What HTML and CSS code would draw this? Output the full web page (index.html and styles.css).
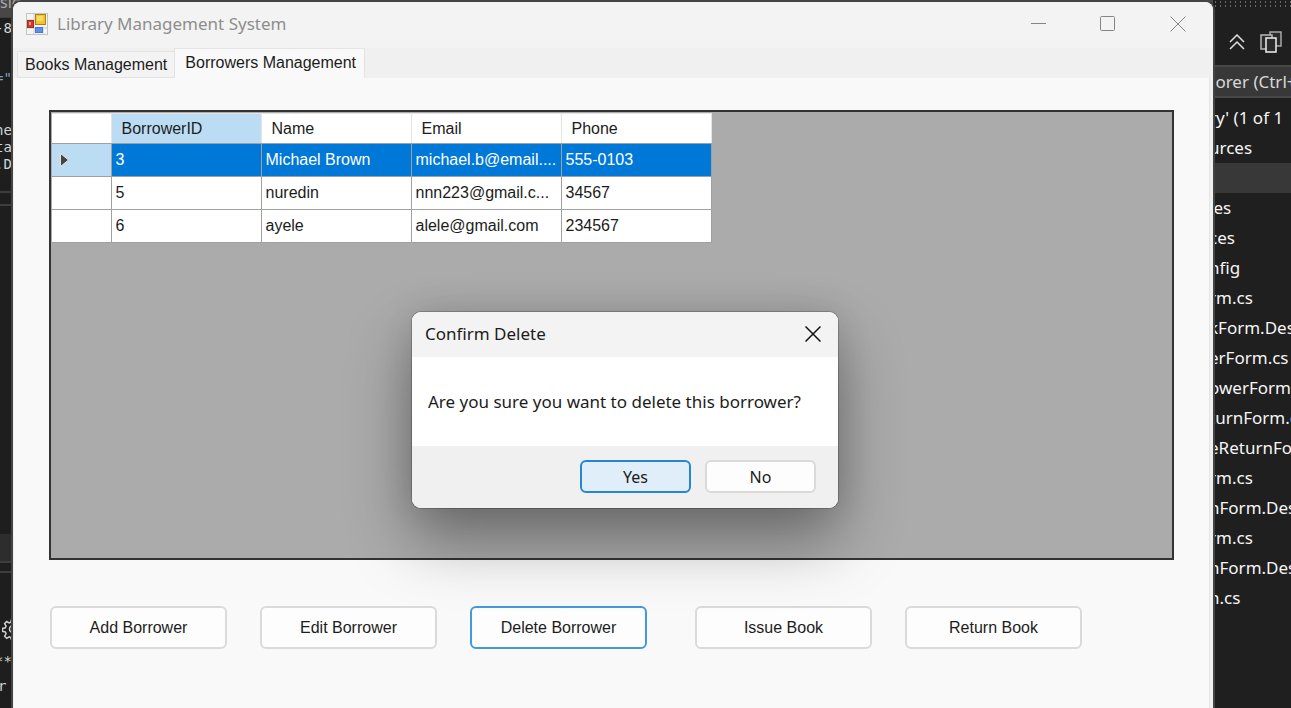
FILE: index.html
```html
<!DOCTYPE html>
<html lang="en">
<head>
<meta charset="utf-8">
<title>Library Management System</title>
<link rel="stylesheet" href="styles.css">
</head>
<body>
<div class="desktop">
  <div class="ide-tabs">
    <span class="ide-tab ide-tab-first">signer.cs</span>
    <span class="ide-tab ide-tab-wide">EditBookForm.cs [Design]</span>
    <span class="ide-tab ide-tab-narrow">EditBookForm.cs</span>
    <span class="ide-tab ide-tab-fill">AddBorrowerForm.cs [Design]</span>
    <span class="ide-tab ide-tab-panel">Solution Explorer</span>
  </div>

  <div class="editor">
    <div class="code code-head">-8</div>
    <div class="code code-attr">="</div>
    <div class="code-group">
      <div class="code">ne</div>
      <div class="code">ta</div>
      <div class="code">.D</div>
    </div>
    <div class="splitter"></div>
    <div class="editor-status"></div>
    <div class="splitter splitter-small"></div>
    <svg class="gear" width="22" height="22" viewBox="0 0 22 22" fill="none" stroke="#d0d0d0" stroke-width="1.5">
      <circle cx="11" cy="11" r="3.5"/>
      <path d="M9.5 1.5h3l.6 2.7 1.8.8 2.4-1.5 2.1 2.1-1.5 2.4.8 1.8 2.7.6v3l-2.7.6-.8 1.8 1.5 2.4-2.1 2.1-2.4-1.5-1.8.8-.6 2.7h-3l-.6-2.7-1.8-.8-2.4 1.5-2.1-2.1 1.5-2.4-.8-1.8-2.7-.6v-3l2.7-.6.8-1.8-1.5-2.4 2.1-2.1 2.4 1.5 1.8-.8z"/>
    </svg>
    <div class="code code-stars">**</div>
    <div class="code code-tail">r</div>
  </div>

  <main class="window">
    <header class="titlebar">
      <svg class="app-icon" width="22" height="22" viewBox="0 0 22 22">
        <rect x=".5" y=".5" width="21" height="21" fill="#f4f4f4" stroke="#c3c3c6"/>
        <path d="M1 7h8M8 1v20M1 15h20M17 14v7" stroke="#cfcfd3" fill="none"/>
        <rect x="9.5" y="1.500" width="10" height="10" fill="#f3c32c" stroke="#a98418"/>
        <rect x="11" y="3" width="6" height="5" fill="#fbdc69"/>
        <rect x="1.500" y="7.500" width="6" height="7" fill="#cf3a2b" stroke="#a12d22"/>
        <rect x="3" y="9" width="2" height="3" fill="#f29a86"/>
        <rect x="9.500" y="14.500" width="7" height="5" fill="#5e90e8" stroke="#4c78cc"/>
      </svg>
      <h1 class="window-title">Library Management System</h1>
      <div class="caption-buttons">
        <button class="caption-button" aria-label="Minimize"><svg width="16" height="16" viewBox="0 0 16 16"><path d="M1 7.500h15"/></svg></button>
        <button class="caption-button" aria-label="Maximize"><svg width="16" height="16" viewBox="0 0 16 16"><rect x=".5" y=".5" width="14" height="14" rx="1"/></svg></button>
        <button class="caption-button" aria-label="Close"><svg width="16" height="16" viewBox="0 0 16 16"><path d="M.5.5l15 15M15.500.5l-15 15"/></svg></button>
      </div>
    </header>

    <nav class="tabs" role="tablist">
      <button class="tab" role="tab" aria-selected="false">Books Management</button>
      <button class="tab tab-active" role="tab" aria-selected="true">Borrowers Management</button>
    </nav>

    <section class="page">
      <div class="grid-view">
        <table class="grid">
          <colgroup><col class="col-marker"><col class="col-data"><col class="col-data"><col class="col-data"><col class="col-data"></colgroup>
          <thead>
            <tr><td class="marker"></td><th class="sorted">BorrowerID</th><th>Name</th><th>Email</th><th>Phone</th></tr>
          </thead>
          <tbody>
            <tr class="selected"><td class="marker"><svg width="9" height="14" viewBox="0 0 9 14"><path d="M.5.5v13L8.500 7z" fill="#444" stroke="#e8e2dc"/></svg></td><td>3</td><td>Michael Brown</td><td>michael.b@email....</td><td>555-0103</td></tr>
            <tr><td class="marker"></td><td>5</td><td>nuredin</td><td>nnn223@gmail.c...</td><td>34567</td></tr>
            <tr><td class="marker"></td><td>6</td><td>ayele</td><td>alele@gmail.com</td><td>234567</td></tr>
          </tbody>
        </table>
      </div>
      <div class="actions">
        <div class="action-group">
          <button class="button">Add Borrower</button>
          <button class="button">Edit Borrower</button>
          <button class="button button-focus">Delete Borrower</button>
        </div>
        <div class="action-group">
          <button class="button">Issue Book</button>
          <button class="button">Return Book</button>
        </div>
      </div>
    </section>

    <div class="dialog" role="dialog" aria-labelledby="dialog-title">
      <header class="dialog-head">
        <h2 class="dialog-title" id="dialog-title">Confirm Delete</h2>
        <button class="dialog-close" aria-label="Close"><svg width="16" height="16" viewBox="0 0 16 16"><path d="M.5.5l15 15M15.500.5l-15 15"/></svg></button>
      </header>
      <p class="dialog-text">Are you sure you want to delete this borrower?</p>
      <footer class="dialog-foot">
        <button class="dialog-button dialog-button-default">Yes</button>
        <button class="dialog-button">No</button>
      </footer>
    </div>
  </main>

  <aside class="explorer">
    <div class="explorer-grip"></div>
    <div class="explorer-tools">
      <svg width="16" height="16" viewBox="0 0 16 16" fill="none" stroke="#e0e0e0" stroke-width="1.500"><path d="M1 8l7-7 7 7M1 15l7-7 7 7"/></svg>
      <svg width="22" height="22" viewBox="0 0 22 22" fill="#2b2b2b" stroke-width="1.500"><path d="M10 1h11v14h-11z" stroke="#a8a8a8"/><path d="M1 4h11v14H1z" stroke="#b8b8b8"/><path d="M6 7h10v14H6z" stroke="#f0f0f0"/></svg>
    </div>
    <div class="explorer-search">lorer (Ctrl+</div>
    <ul class="tree">
      <li>ry' (1 of 1</li>
      <li>urces</li>
      <li class="tree-selected"></li>
      <li>ies</li>
      <li>ces</li>
      <li>nfig</li>
      <li>rm.cs</li>
      <li>kForm.Des</li>
      <li>erForm.cs</li>
      <li>owerForm</li>
      <li>turnForm.c</li>
      <li>eReturnFor</li>
      <li>rm.cs</li>
      <li>nForm.Des</li>
      <li>rm.cs</li>
      <li>nForm.Des</li>
      <li>n.cs</li>
    </ul>
  </aside>
</div>
</body>
</html>
```

FILE: styles.css
```css
* {
  box-sizing: border-box;
}

body {
  margin: 0;
  background: #1f1f1f;
  font-family: "Liberation Sans", Arial, sans-serif;
  font-size: 16px;
  line-height: 20px;
  color: #1c1c1c;
}

button {
  margin: 0;
  padding: 0;
  border: 0;
  background: none;
  font: inherit;
  color: inherit;
}

.desktop {
  position: relative;
  display: grid;
  grid-template-columns: 13px minmax(0, 1fr) 78px;
  height: 100vh;
  overflow: hidden;
}

/* IDE behind the window */
.ide-tabs {
  position: absolute;
  top: 0;
  left: 0;
  right: 78px;
  height: 17px;
  display: flex;
  align-items: flex-end;
  background: #484646;
  font-family: "Noto Sans", sans-serif;
  color: #a8a8a8;
  line-height: 24px;
  white-space: nowrap;
  padding-bottom: 3px;
}

.ide-tab-first { width: 148px; }
.ide-tab-wide { width: 254px; }
.ide-tab-narrow { width: 186px; }
.ide-tab-fill { flex: 1; }
.ide-tab-panel { width: 163px; color: #dcdcdc; }

.editor {
  margin-top: 17px;
  border-top: 1px solid #3d3d3d;
  overflow: hidden;
  background: #1e1e1e;
}

.code {
  height: 17px;
  font-family: "DejaVu Sans Mono", monospace;
  font-size: 14px;
  line-height: 17px;
  text-indent: -5px;
  color: #d4d4d4;
  white-space: pre;
}

.code-head { margin-top: 2px; }
.code-attr { margin-top: 33px; color: #7da3c4; }
.code-group { margin-top: 35px; }

.splitter {
  height: 15px;
  margin-top: 18px;
  border: solid #3d3d3d;
  border-width: 2px 0;
}

.editor-status {
  height: 27px;
  margin-top: 328px;
  background: #2d2d2d;
}

.splitter-small {
  height: 12px;
  margin-top: 0;
}

.gear {
  display: block;
  margin: 45px 0 0 2px;
}

.code-stars { margin-top: 13px; }
.code-tail { margin-top: 8px; text-indent: -2px; }

.explorer {
  background: #1f1f1f;
  color: #f5f5f5;
  font-family: "Noto Sans", sans-serif;
  font-size: 17px;
  line-height: 30px;
  white-space: nowrap;
  overflow: hidden;
}

.explorer-grip {
  height: 8px;
  background: radial-gradient(circle, #686868 1px, transparent 1px) 0 0 / 5px 4px;
}

.explorer-tools {
  display: flex;
  align-items: center;
  gap: 15px;
  height: 57px;
  padding: 10px 0 0 16px;
}

.explorer-search {
  height: 33px;
  border: solid #484848;
  border-width: 2px 0;
  background: #383838;
  color: #d8d8d8;
  text-indent: -2px;
}

.tree {
  margin: 5px 0 0;
  padding: 0;
  list-style: none;
  text-indent: -4px;
}

.tree li {
  height: 30px;
}

.tree-selected {
  background: #383838;
}

/* Main window */
.window {
  position: relative;
  display: flex;
  flex-direction: column;
  margin-top: 2px;
  border-radius: 8px 8px 0 0;
  background: #f0f0f0;
  box-shadow: 0 0 0 2px #444;
}

.titlebar {
  display: flex;
  align-items: center;
  height: 46px;
  padding: 0 0 2px 13px;
  border-radius: 8px 8px 0 0;
  background: #f3f3f3;
}

.window-title {
  flex: 1;
  margin: 0 0 0 9px;
  font-family: "Noto Sans", sans-serif;
  font-size: 17px;
  font-weight: 400;
  color: #8e8e8e;
}

.caption-buttons {
  display: flex;
}

.caption-button {
  display: flex;
  align-items: center;
  justify-content: center;
  width: 70px;
  height: 44px;
}

.caption-button svg {
  fill: none;
  stroke: #858585;
}

.tabs {
  display: flex;
  align-items: flex-end;
  height: 30px;
  padding-left: 4px;
}

.tab {
  height: 27px;
  padding: 0 7px;
  border: 1px solid #e3e3e3;
  border-right: 0;
  background: #f3f3f3;
}

.tab-active {
  height: 30px;
  padding: 0 8px 2px 10px;
  border-right: 1px solid #e3e3e3;
  border-bottom: 0;
  background: #f9f9f9;
}

.page {
  flex: 1;
  margin: 0 3px 0 1px;
  padding: 32px 35px 0;
  border: solid #e5e5e5;
  border-width: 0 1px 0 0;
  background: #f9f9f9;
}

.grid-view {
  height: 450px;
  padding: 1px;
  border: 2px solid #333;
  background: #ababab;
}

.grid {
  border-collapse: collapse;
  table-layout: fixed;
  width: 659px;
  background: #fff;
}

.col-marker { width: 59px; }
.col-data { width: 150px; }

.grid th,
.grid td {
  height: 33px;
  padding: 0 4px;
  border: 1px solid #a0a0a0;
  font-weight: 400;
  text-align: left;
  white-space: nowrap;
}

.grid thead th,
.grid thead td {
  height: 30px;
  padding: 0 10px;
  border-color: #e5e5e5 #e5e5e5 #a0a0a0;
}

.grid .sorted,
.grid .selected .marker {
  background: #bcdcf4;
}

.grid .marker {
  padding: 0 8px;
  border-left: 0;
  border-top-color: #e5e5e5;
}

.marker svg {
  display: block;
}

.selected {
  background: #0078d7;
  color: #fff;
}

.actions {
  display: flex;
  gap: 48px;
  padding: 46px 0 0 1px;
}

.action-group {
  display: flex;
  gap: 33px;
}

.button {
  width: 177px;
  height: 43px;
  border: 2px solid #dadada;
  border-radius: 6px;
  background: #fdfdfd;
}

.button-focus {
  border-color: #4299dd;
}

/* Confirmation dialog */
.dialog {
  position: absolute;
  top: 310px;
  left: 399px;
  width: 426px;
  border-radius: 9px;
  overflow: hidden;
  background: #fff;
  font-family: "Noto Sans", sans-serif;
  box-shadow: 0 0 0 1px rgba(0, 0, 0, 0.2), 0 32px 64px rgba(0, 0, 0, 0.36), 0 0 36px rgba(0, 0, 0, 0.12);
}

.dialog-head {
  display: flex;
  align-items: center;
  justify-content: space-between;
  height: 45px;
  padding: 0 17px 2px 13px;
  background: #f3f3f3;
}

.dialog-title {
  margin: 0;
  font-size: 17px;
  font-weight: 400;
}

.dialog-close {
  display: flex;
}

.dialog-close svg {
  fill: none;
  stroke: #111;
  stroke-width: 1.5;
}

.dialog-text {
  margin: 0;
  padding: 35px 16px 34px;
  font-size: 17px;
}

.dialog-foot {
  display: flex;
  justify-content: flex-end;
  gap: 14px;
  padding: 14px 22px 15px;
  background: #f0f0f0;
}

.dialog-button {
  width: 111px;
  height: 33px;
  border: 2px solid #dadada;
  border-radius: 6px;
  background: #fdfdfd;
}

.dialog-button-default {
  border-color: #2586d3;
  background: #e0eef9;
}
```
